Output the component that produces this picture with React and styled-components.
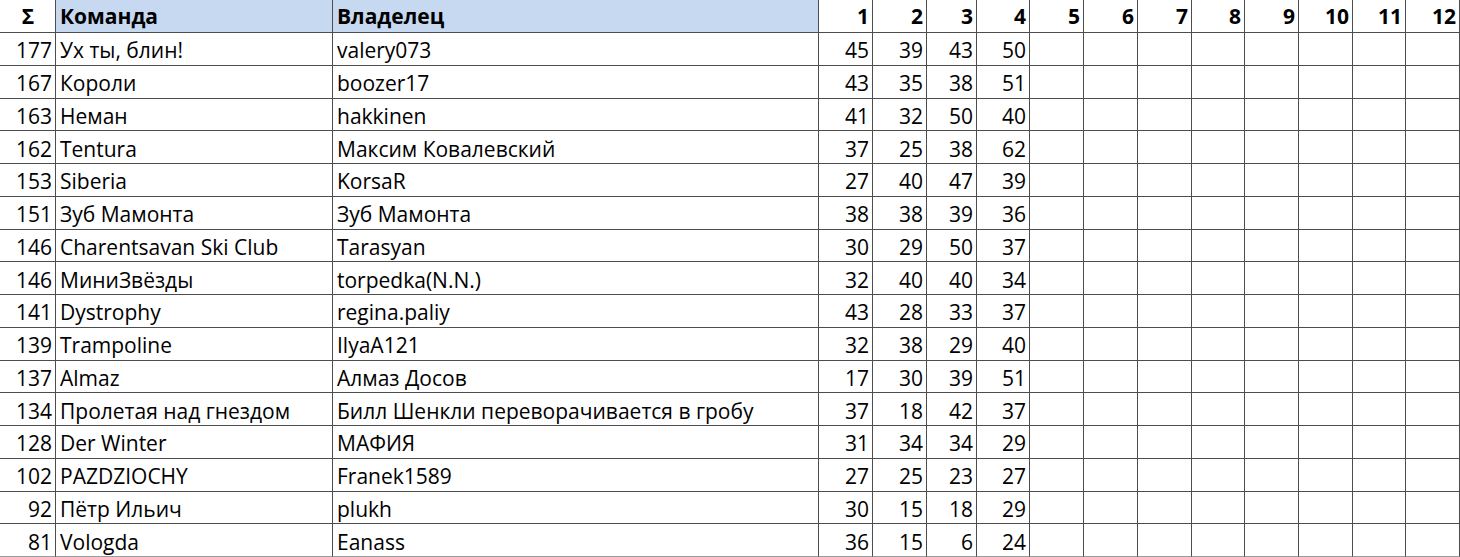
import React from "react";
import styled, { createGlobalStyle } from "styled-components";

const GlobalStyle = createGlobalStyle`
  html, body {
    margin: 0;
    padding: 0;
    background: #ffffff;
  }
  body {
    font-family: "Open Sans", "Noto Sans", "Liberation Sans", sans-serif;
    color: #000000;
  }
`;

const COLUMNS = "56px 277px 486px 54px 54px 50px 53px 54px 54px 54px 53px 54px 54px 53px 54px";
const LINE = "#4d4d4d";

const Sheet = styled.div`
  width: 1460px;
  height: 557px;
  overflow: hidden;
  display: flex;
  flex-direction: column;
  font-size: 21px;
`;

const Row = styled.div`
  display: grid;
  grid-template-columns: ${COLUMNS};
  height: ${(p) => (p.$header ? "33px" : "32.75px")};
  flex: none;
`;

const Cell = styled.div`
  box-sizing: border-box;
  display: flex;
  align-items: center;
  justify-content: ${(p) =>
    p.$align === "right" ? "flex-end" : p.$align === "center" ? "center" : "flex-start"};
  padding: ${(p) => (p.$head ? "1px 3px 0 4px" : "4px 3px 0 4px")};
  border-right: 1px solid ${LINE};
  border-bottom: 1px solid ${(p) => (p.$last ? "#9a9a9a" : LINE)};
  background: ${(p) => (p.$fill ? "#c6d9f0" : "#ffffff")};
  font-weight: ${(p) => (p.$head ? 700 : 400)};
  white-space: nowrap;
  overflow: hidden;
  line-height: 1;
`;

const rows = [
  [177, "Ух ты, блин!", "valery073", [45, 39, 43, 50]],
  [167, "Короли", "boozer17", [43, 35, 38, 51]],
  [163, "Неман", "hakkinen", [41, 32, 50, 40]],
  [162, "Tentura", "Максим Ковалевский", [37, 25, 38, 62]],
  [153, "Siberia", "KorsaR", [27, 40, 47, 39]],
  [151, "Зуб Мамонта", "Зуб Мамонта", [38, 38, 39, 36]],
  [146, "Charentsavan Ski Club", "Tarasyan", [30, 29, 50, 37]],
  [146, "МиниЗвёзды", "torpedka(N.N.)", [32, 40, 40, 34]],
  [141, "Dystrophy", "regina.paliy", [43, 28, 33, 37]],
  [139, "Trampoline", "IlyaA121", [32, 38, 29, 40]],
  [137, "Almaz", "Алмаз Досов", [17, 30, 39, 51]],
  [134, "Пролетая над гнездом", "Билл Шенкли переворачивается в гробу", [37, 18, 42, 37]],
  [128, "Der Winter", "МАФИЯ", [31, 34, 34, 29]],
  [102, "PAZDZIOCHY", "Franek1589", [27, 25, 23, 27]],
  [92, "Пётр Ильич", "plukh", [30, 15, 18, 29]],
  [81, "Vologda", "Eanass", [36, 15, 6, 24]],
];

const rounds = Array.from({ length: 12 }, (_, i) => i + 1);

export default function App() {
  return (
    <>
      <GlobalStyle />
      <Sheet>
        <Row $header>
          <Cell $head $align="center">Σ</Cell>
          <Cell $head $fill>Команда</Cell>
          <Cell $head $fill>Владелец</Cell>
          {rounds.map((r) => (
            <Cell key={r} $head $align="right">{r}</Cell>
          ))}
        </Row>
        {rows.map(([total, team, owner, scores], idx) => {
          const last = idx === rows.length - 1;
          return (
            <Row key={idx}>
              <Cell $align="right" $last={last}>{total}</Cell>
              <Cell $last={last}>{team}</Cell>
              <Cell $last={last}>{owner}</Cell>
              {rounds.map((r, i) => (
                <Cell key={r} $align="right" $last={last}>
                  {scores[i] !== undefined ? scores[i] : ""}
                </Cell>
              ))}
            </Row>
          );
        })}
      </Sheet>
    </>
  );
}
